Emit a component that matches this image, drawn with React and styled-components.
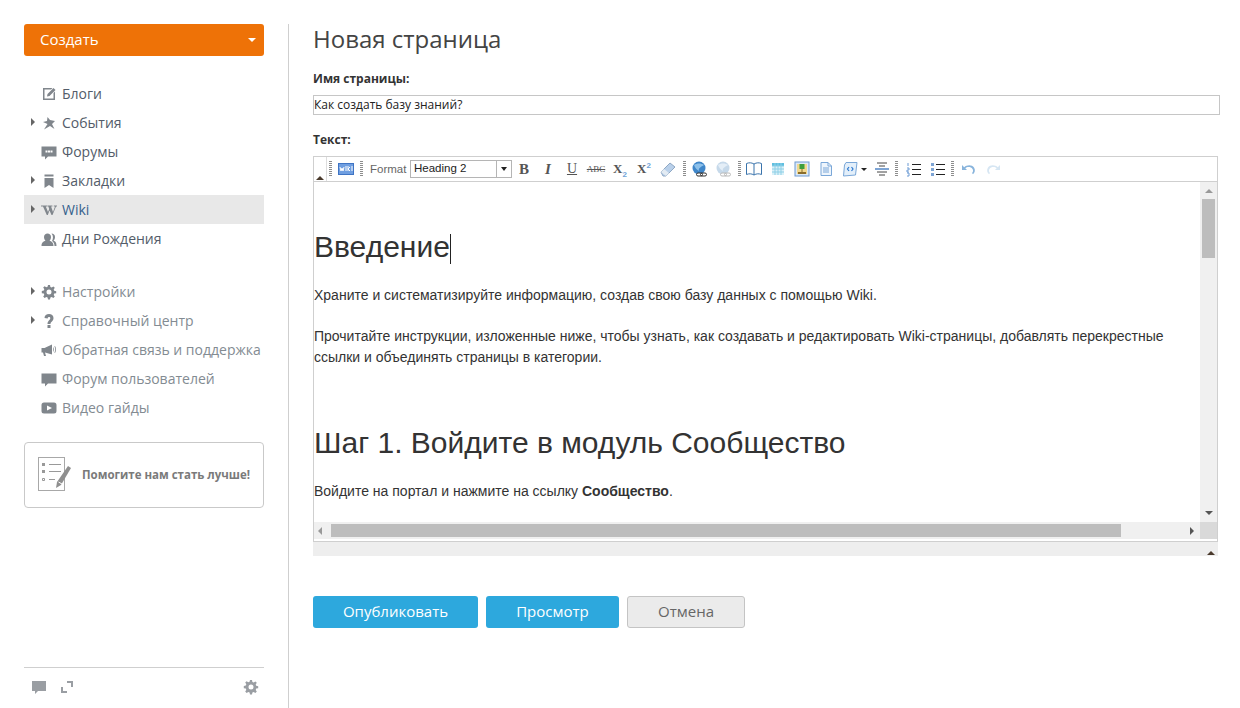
import React from "react";
import styled, { createGlobalStyle } from "styled-components";

const Global = createGlobalStyle`
  html, body { margin: 0; padding: 0; background: #fff; }
  body { font-family: "Open Sans", "Liberation Sans", sans-serif; }
  * { box-sizing: border-box; }
`;

const Page = styled.div`
  display: flex;
  width: 1240px;
  height: 708px;
  overflow: hidden;
  padding-top: 24px;
`;
const Sidebar = styled.aside`
  width: 264px;
  margin-left: 24px;
  padding-right: 24px;
  display: flex;
  flex-direction: column;
  height: 684px;
  flex: none;
`;
const Divider = styled.div`
  width: 1px;
  height: 684px;
  background: #cfcfcf;
  flex: none;
  margin-right: 24px;
`;
const CreateButton = styled.button`
  width: 240px;
  height: 32px;
  border: 0;
  border-radius: 3px;
  background: #ee7207;
  color: #fff;
  font: 15px "Open Sans", sans-serif;
  display: flex;
  align-items: center;
  justify-content: space-between;
  padding: 0 8px 2px 16px;
  flex: none;
`;
const CaretDown = styled.span`
  width: 0;
  height: 0;
  margin-top: 2px;
  border-left: 4px solid transparent;
  border-right: 4px solid transparent;
  border-top: 4px solid #fff;
`;
const Nav = styled.nav`
  margin-top: ${(p) => p.$top}px;
  display: flex;
  flex-direction: column;
`;
const NavRow = styled.div`
  height: 29px;
  width: 240px;
  display: flex;
  align-items: center;
  padding-left: 7px;
  background: ${(p) => (p.$active ? "#e8e8e8" : "transparent")};
  color: ${(p) => (p.$active ? "#36618c" : p.$muted ? "#838b92" : "#535c69")};
  font-size: 14px;
  white-space: nowrap;
  flex: none;
`;
const Expander = styled.span`
  width: 0;
  height: 0;
  border-top: 4px solid transparent;
  border-bottom: 4px solid transparent;
  border-left: 4px solid ${(p) => (p.$on ? "#666" : "transparent")};
  margin-right: 6px;
  flex: none;
  margin-top: -1px;
`;
const NavIcon = styled.svg`
  width: 16px;
  height: 16px;
  fill: #80868c;
  flex: none;
  margin-right: 5px;
`;
const SurveyCard = styled.div`
  margin-top: 20px;
  width: 240px;
  height: 66px;
  flex: none;
  border: 1px solid #c9c9c9;
  border-radius: 4px;
  display: flex;
  align-items: center;
  padding-left: 13px;
  gap: 10px;
  color: #7a7a7a;
  font-size: 11.5px;
  font-weight: 700;
  white-space: nowrap;
`;
const SurveyText = styled.span`
  margin-top: -2px;
`;
const SideFooter = styled.div`
  margin-top: auto;
  width: 240px;
  height: 41px;
  border-top: 1px solid #cfcfcf;
  display: flex;
  align-items: flex-start;
  padding: 11px 5px 0 7px;
  gap: 12px;
  flex: none;
`;
const FooterIcon = styled.svg`
  width: 16px;
  height: 16px;
  fill: #9a9ea3;
  margin-left: ${(p) => (p.$auto ? "auto" : "0")};
`;

const Main = styled.main`
  width: 907px;
  flex: none;
  display: flex;
  flex-direction: column;
`;
const Title = styled.h1`
  margin: 0;
  font-size: 24px;
  font-weight: 400;
  line-height: 30px;
  color: #444;
`;
const Label = styled.label`
  display: block;
  font-size: 12px;
  font-weight: 700;
  color: #333;
  line-height: 16px;
  margin-top: ${(p) => p.$top}px;
`;
const TitleInput = styled.div`
  margin-top: 8px;
  height: 20px;
  width: 907px;
  border: 1px solid #c6c6c6;
  font: 12px/18px "Open Sans", sans-serif;
  color: #222;
`;
const Editor = styled.div`
  margin-top: 8px;
  width: 905px;
  flex: none;
`;
const Toolbar = styled.div`
  height: 26px;
  border: 1px solid #cfcfcf;
  display: flex;
  align-items: center;
`;
const Collapse = styled.div`
  width: 13px;
  height: 100%;
  border-right: 1px solid #ddd;
  position: relative;
  flex: none;
  &::after {
    content: "";
    position: absolute;
    left: 2px;
    bottom: 1px;
    width: 0;
    height: 0;
    border-left: 4px solid transparent;
    border-right: 4px solid transparent;
    border-bottom: 4px solid #4a3a2c;
  }
`;
const Gripper = styled.span`
  width: 3px;
  height: 16px;
  flex: none;
  margin: 0 ${(p) => p.$r ?? 6}px 0 ${(p) => p.$l ?? 6}px;
  background: repeating-linear-gradient(to bottom, #8d8d8d 0 1px, #fff 1px 2px);
`;
const Tool = styled.svg`
  width: ${(p) => p.$w ?? 16}px;
  height: 16px;
  margin: 0 ${(p) => p.$m ?? 4}px;
  flex: none;
`;
const LetterTool = styled.span`
  width: 24px;
  text-align: center;
  flex: none;
  font-family: "Liberation Serif", serif;
  font-size: ${(p) => p.$size ?? 14}px;
  font-weight: ${(p) => (p.$plain ? 400 : 700)};
  font-style: ${(p) => (p.$italic ? "italic" : "normal")};
  text-decoration: ${(p) => p.$deco ?? "none"};
  color: #555;
  line-height: 16px;
  & sub, & sup { font: 700 8px "Liberation Sans", sans-serif; color: #6fa4d8; line-height: 0; }
`;
const FormatLabel = styled.span`
  font: 11.5px "Liberation Sans", sans-serif;
  color: #666;
  width: 35px;
  margin: 0 5px 0 2px;
  flex: none;
`;
const FormatSelect = styled.div`
  width: 102px;
  height: 18px;
  border: 1px solid #b5b5b5;
  display: flex;
  flex: none;
  font: 11.5px/15px "Liberation Sans", sans-serif;
  color: #222;
  padding-left: 3px;
  justify-content: space-between;
`;
const SelectArrow = styled.span`
  width: 15px;
  border-left: 1px solid #b5b5b5;
  display: flex;
  align-items: center;
  justify-content: center;
  &::after {
    content: "";
    width: 0;
    height: 0;
    border-left: 3px solid transparent;
    border-right: 3px solid transparent;
    border-top: 4px solid #222;
  }
`;
const DropTick = styled.span`
  width: 0;
  height: 0;
  margin: 0 3px 0 -1px;
  border-left: 3px solid transparent;
  border-right: 3px solid transparent;
  border-top: 3px solid #222;
  flex: none;
`;
const EditArea = styled.div`
  display: grid;
  grid-template-columns: 1fr 17px;
  grid-template-rows: 340px 17px;
  border-left: 1px solid #cfcfcf;
  border-right: 1px solid #cfcfcf;
  height: 360px;
  border-bottom: 1px solid #cfcfcf;
  padding-bottom: 2px;
  background: #fff;
`;
const Content = styled.div`
  overflow: hidden;
  color: #333;
  font: 14px/21px "Liberation Sans", sans-serif;
`;
const Heading = styled.h2`
  margin: ${(p) => p.$top}px 0 0;
  font-weight: 400;
  font-size: 30px;
  line-height: 34px;
  color: #333;
  white-space: nowrap;
`;
const Caret = styled.span`
  display: inline-block;
  width: 1px;
  height: 30px;
  background: #222;
  vertical-align: -7px;
`;
const Para = styled.p`
  margin: ${(p) => p.$top}px 0 0;
`;
const VScroll = styled.div`
  background: #f0f0f0;
  padding: 0 2px;
  display: flex;
  flex-direction: column;
  align-items: center;
`;
const ArrowUp = styled.span`
  width: 0; height: 0; margin-top: 7px;
  border-left: 4px solid transparent; border-right: 4px solid transparent;
  border-bottom: 4px solid #999;
`;
const ArrowDown = styled.span`
  width: 0; height: 0; margin-top: auto; margin-bottom: 7px;
  border-left: 4px solid transparent; border-right: 4px solid transparent;
  border-top: 4px solid #555;
`;
const VThumb = styled.div`
  width: 13px;
  height: 59px;
  background: #bdbdbd;
  margin-top: 6px;
`;
const HScroll = styled.div`
  background: #f0f0f0;
  display: flex;
  align-items: center;
  padding-left: 4px;
`;
const ArrowLeft = styled.span`
  width: 0; height: 0;
  border-top: 4px solid transparent; border-bottom: 4px solid transparent;
  border-right: 4px solid #999;
`;
const ArrowRight = styled.span`
  width: 0; height: 0; margin-left: auto; margin-right: 6px;
  border-top: 4px solid transparent; border-bottom: 4px solid transparent;
  border-left: 4px solid #555;
`;
const HThumb = styled.div`
  width: 790px;
  height: 13px;
  margin-left: 9px;
  background: #bdbdbd;
`;
const Corner = styled.div`
  background: #d9d9d9;
`;
const ResizeBar = styled.div`
  height: 14px;
  width: 905px;
  background: #eee;
  position: relative;
  &::after {
    content: "";
    position: absolute;
    right: 3px;
    bottom: 1px;
    width: 0; height: 0;
    border-left: 4px solid transparent;
    border-right: 4px solid transparent;
    border-bottom: 4px solid #4a3a2c;
  }
`;
const Actions = styled.div`
  margin-top: 40px;
  display: flex;
  gap: 8px;
`;
const ActionButton = styled.button`
  height: 32px;
  width: ${(p) => p.$w}px;
  border-radius: 3px;
  font: 15px "Open Sans", sans-serif;
  border: ${(p) => (p.$ghost ? "1px solid #c4c4c4" : "0")};
  background: ${(p) => (p.$ghost ? "#ebebeb" : "#2da8dd")};
  color: ${(p) => (p.$ghost ? "#666" : "#fff")};
  padding: 0 0 2px;
`;

const gearPath = "M7 1h2l.4 2 1.300.5 1.700-1.100 1.400 1.400-1.100 1.700.5 1.300 2 .4v2l-2 .4-.5 1.300 1.100 1.700-1.400 1.400-1.700-1.100-1.300.5-.4 2H7l-.4-2-1.300-.5-1.700 1.100-1.400-1.400 1.100-1.700-.5-1.300-2-.4V7l2-.4.5-1.300L2.200 3.600l1.400-1.400 1.700 1.100 1.300-.5zM8 5.500a2.500 2.500 0 1 0 0 5 2.500 2.500 0 0 0 0-5z";
const navTop = [
  { t: "Блоги", evenodd: 1, d: "M2 2h9.500L10 3.500H3.500v9h9V7L14 5.500V14H2z M12.500 2 14.500 4 8.500 10 6 10.500 6.500 8z" },
  { t: "События", e: 1, d: "M6.500 2 9 5l5 1-3 3 2.500 5-4.500-3-6 3.500 3.500-5.500L2 7l4-1z" },
  { t: "Форумы", d: "M0.500 2.500h15v10H7l-3 3v-3H.500z", dots: 1 },
  { t: "Закладки", e: 1, d: "M3.500 1.500h9v2h-9z M3.500 5h9v10L8 12l-4.500 3z" },
  { t: "Wiki", e: 1, active: 1, d: "M0 3.500h6v1H4.800L7 10l1.200-3-.8-2.500H6.400v-1h5v1h-1.300L12 10l2-5.500h-1.200v-1H16v1h-1L11.500 13h-1L8.500 8.500 6.800 13h-1L2 4.500H0z" },
  { t: "Дни Рождения", d: "M.5 15c0-3.500 2-4.500 4-5.200C3.500 8.700 3 7.500 3 6 3 3.700 4.500 2.500 6.500 2.500S10 3.700 10 6c0 1.500-.5 2.700-1.500 3.800 2 .7 4 1.700 4 5.200z M10.500 2.500c2 0 3.500 1.200 3.500 3.500 0 1.500-.5 2.700-1.500 3.800 2 .7 3 1.700 3 5.200h-2c0-2.500-1-4-2.500-5 1.300-2 1.500-5.500-.5-7.500z" },
];
const navBottom = [
  { t: "Настройки", e: 1, d: gearPath, evenodd: 1 },
  { t: "Справочный центр", e: 1, d: "M3.500 5C3.500 2.500 5.500 1 8 1s4.500 1.500 4.500 4c0 3.500-3 3.500-3 6H6.500c0-3.500 2.800-4 2.800-5.800C9.300 4.300 8.800 4 8 4s-1.300.5-1.300 1.500zM6.500 12h3v3h-3z" },
  { t: "Обратная связь и поддержка", d: "M.5 6h3l7.500-3.500v10L4 10.500l1 3.500H3l-1-3.500H.5z M12 5c1 1 1 4 0 5z M14 4c1.300 1.500 1.300 5.500 0 7l-.6-.5c1-1.500 1-4.500 0-6z" },
  { t: "Форум пользователей", d: "M.5 2.500h15v10H7l-3 3v-3H.5z" },
  { t: "Видео гайды", evenodd: 1, d: "M3 2.500h10a2.500 2.500 0 0 1 2.500 2.500v6a2.500 2.500 0 0 1-2.500 2.500H3A2.500 2.500 0 0 1 .5 11V5A2.500 2.500 0 0 1 3 2.500z M6 5.500v5L11 8z" },
];

function Item({ i, muted }) {
  return (
    <NavRow $active={i.active} $muted={muted}>
      <Expander $on={i.e} />
      <NavIcon viewBox="0 0 16 16" fillRule={i.evenodd ? "evenodd" : "nonzero"}>
        <path d={i.d} />
        {i.dots && <path fill="#fff" d="M4.500 6.500h2v2h-2z M7 6.500h2v2H7z M9.500 6.500h2v2h-2z" />}
      </NavIcon>
      {i.t}
    </NavRow>
  );
}

function Survey() {
  return (
    <svg width="34" height="36" viewBox="0 0 34 36" fill="none">
      <rect x="0.500" y="0.500" width="26" height="33" stroke="#a8a8a8" fill="#fff" />
      <path d="M4 6h3v3H4z M4 13h3v3H4z" fill="#999" />
      <path d="M4.500 21.500h2v2h-2z" stroke="#999" />
      <path d="M11 7.500h12M11 14.500h12M11 22.500h6" stroke="#999" />
      <path d="M30 9l3 2-10 17-5 3 1-6z" fill="#8f8f8f" />
      <path d="M20.500 25l3.500 2" stroke="#fff" />
    </svg>
  );
}

const icons = {
  wiki: (<><rect x="0" y="2" width="16" height="12" fill="#3f74c4" /><rect x="1" y="3" width="14" height="10" fill="#6f9ee0" /><path d="M2 6l1 4 1-3 1 3 1-4M8 5v5M10 5v5M10 8l2-2M10 8l2 2M14 5v5" stroke="#fff" strokeWidth="1" fill="none" /></>),
  eraser: (<><path d="M1 11 10 2l5 4-9 9H3z" fill="#b9d0ea" stroke="#8fa8c4" /><path d="M1 11l5 4 3-3-5-4z" fill="#e3ebf3" /></>),
  globe: (<><circle cx="7" cy="7" r="6.500" fill="#3f86c9" /><path d="M2 4c3-2 7-2 10 0-3 2-6 3-5 6-2-1-4-3-5-6z" fill="#8cc0ea" /><path d="M6 12h3a1.500 1.500 0 0 1 0 3H6a1.500 1.500 0 0 1 0-3zM10 12h3a1.500 1.500 0 0 1 0 3h-3a1.500 1.500 0 0 1 0-3z" fill="#fff" stroke="#333" /></>),
  globeOff: (<><circle cx="7" cy="7" r="6.500" fill="#c6d9ea" /><path d="M2 4c3-2 7-2 10 0-3 2-6 3-5 6-2-1-4-3-5-6z" fill="#e4eef7" /><path d="M6 12h3a1.500 1.500 0 0 1 0 3H6a1.500 1.500 0 0 1 0-3zM10 12h3a1.500 1.500 0 0 1 0 3h-3a1.500 1.500 0 0 1 0-3z" fill="#fff" stroke="#bbb" /></>),
  book: (<path d="M.5 2.500c2.500-1 5-1 7.500.5 2.500-1.500 5-1.500 7.500-.5v11c-2.500-1-5-1-7.500.5-2.500-1.500-5-1.500-7.500-.5zM8 3v11" fill="#fff" stroke="#3a74ac" />),
  table: (<><rect x="2" y="2" width="12" height="12" fill="#d9f0f8" /><path d="M2 2h12v3H2z" fill="#5fbfe0" /><path d="M2 5h12M2 8h12M2 11h12M5 2v12M8 2v12M11 2v12" stroke="#8ecfe6" /></>),
  image: (<><rect x="1" y="1" width="14" height="14" fill="#dbe9f8" stroke="#6f9ad0" /><rect x="3" y="3" width="10" height="10" fill="#f2d88e" /><path d="M5.500 3h5v5h-5z" fill="#3d9e3d" /><path d="M7.500 8h1v3h-1zM4 11h8v2H4z" fill="#8a6d2c" /></>),
  doc: (<path d="M3 1.500h7l3.500 3.500v9.500H3zM10 1.500V5h3.500M5 7h6M5 9h6M5 11h6" fill="#eef5fc" stroke="#7aa7d8" />),
  source: (<><path d="M2.500 4 4 1.500h11L13.500 14 1.500 15z" fill="#e3effa" stroke="#7aa7d8" /><path d="M7 6 5.500 8 7 10M9.500 6 11 8 9.500 10" stroke="#2b78d0" strokeWidth="1.200" fill="none" /></>),
  align: (<><path d="M3 2h10M5 5h6" stroke="#444" /><rect x="1" y="7" width="14" height="2" fill="#7da4d4" /><path d="M3 11h10M5 14h6" stroke="#444" /></>),
  ol: (<><path d="M2 2v3M1 7h2v2H1v2h2M1 12h2v3H1" stroke="#6a9ad4" fill="none" /><path d="M6 3.500h9M6 8.500h9M6 13.500h9" stroke="#222" /></>),
  ul: (<><path d="M1 2h3v3H1zM1 7h3v3H1zM1 12h3v3H1z" fill="#7da4d4" /><path d="M6 3.500h9M6 8.500h9M6 13.500h9" stroke="#222" /></>),
  undo: (<path d="M1 4v5h5L4.300 7.300C6 5.500 10 5.500 11.500 8c1 1.500.5 3-.5 4l1 1.300C14 11.500 14.500 9 13 6.500 11 3.500 6 3.500 3.200 6.200z" fill="#88b4dc" />),
  redo: (<path d="M15 4v5h-5l1.700-1.700C10 5.500 6 5.500 4.500 8c-1 1.500-.5 3 .5 4l-1 1.300C2 11.500 1.500 9 3 6.500 5 3.500 10 3.500 12.800 6.200z" fill="#d6e6f3" />),
};

function T({ n, m }) {
  return <Tool viewBox="0 0 16 16" $m={m}>{icons[n]}</Tool>;
}

export default function App() {
  return (
    <Page>
      <Global />
      <Sidebar>
        <CreateButton>Создать<CaretDown /></CreateButton>
        <Nav $top={23}>{navTop.map((i) => <Item key={i.t} i={i} />)}</Nav>
        <Nav $top={24}>{navBottom.map((i) => <Item key={i.t} i={i} muted />)}</Nav>
        <SurveyCard><Survey /><SurveyText>Помогите нам стать лучше!</SurveyText></SurveyCard>
        <SideFooter>
          <FooterIcon viewBox="0 0 16 16"><path d="M1 2h14v10H7l-3 3v-3H1z" /></FooterIcon>
          <FooterIcon viewBox="0 0 16 16"><path d="M8 2h6v6h-2V4H8z M2 8h2v4h4v2H2z" /></FooterIcon>
          <FooterIcon $auto viewBox="0 0 16 16" fillRule="evenodd"><path d={gearPath} /></FooterIcon>
        </SideFooter>
      </Sidebar>
      <Divider />
      <Main>
        <Title>Новая страница</Title>
        <Label $top={17}>Имя страницы:</Label>
        <TitleInput>Как создать базу знаний?</TitleInput>
        <Label $top={17}>Текст:</Label>
        <Editor>
          <Toolbar>
            <Collapse />
            <Gripper $l={2} $r={6} />
            <T n="wiki" m={0} />
            <Gripper $l={6} $r={5} />
            <FormatLabel>Format</FormatLabel>
            <FormatSelect>Heading 2<SelectArrow /></FormatSelect>
            <LetterTool $size={15}>B</LetterTool>
            <LetterTool $size={15} $italic>I</LetterTool>
            <LetterTool $size={14} $plain $deco="underline">U</LetterTool>
            <LetterTool $size={9} $plain $deco="line-through">ABC</LetterTool>
            <LetterTool $size={13}>X<sub>2</sub></LetterTool>
            <LetterTool $size={13}>X<sup>2</sup></LetterTool>
            <T n="eraser" />
            <Gripper $l={3} $r={2} />
            <T n="globe" />
            <T n="globeOff" />
            <Gripper $l={2} $r={1} />
            <T n="book" />
            <T n="table" />
            <T n="image" />
            <T n="doc" />
            <T n="source" m={4} />
            <DropTick />
            <T n="align" m={4} />
            <Gripper $l={1} $r={4} />
            <T n="ol" />
            <T n="ul" />
            <Gripper $l={1} $r={3} />
            <T n="undo" />
            <T n="redo" />
          </Toolbar>
          <EditArea>
            <Content>
              <Heading $top={48}>Введение<Caret /></Heading>
              <Para $top={21}>Храните и систематизируйте информацию, создав свою базу данных с помощью Wiki.</Para>
              <Para $top={20}>Прочитайте инструкции, изложенные ниже, чтобы узнать, как создавать и редактировать Wiki-страницы, добавлять перекрестные ссылки и объединять страницы в категории.</Para>
              <Heading $top={58}>Шаг 1. Войдите в модуль Сообщество</Heading>
              <Para $top={21}>Войдите на портал и нажмите на ссылку <b>Сообщество</b>.</Para>
            </Content>
            <VScroll><ArrowUp /><VThumb /><ArrowDown /></VScroll>
            <HScroll><ArrowLeft /><HThumb /><ArrowRight /></HScroll>
            <Corner />
          </EditArea>
          <ResizeBar />
        </Editor>
        <Actions>
          <ActionButton $w={165}>Опубликовать</ActionButton>
          <ActionButton $w={133}>Просмотр</ActionButton>
          <ActionButton $w={118} $ghost>Отмена</ActionButton>
        </Actions>
      </Main>
    </Page>
  );
}
